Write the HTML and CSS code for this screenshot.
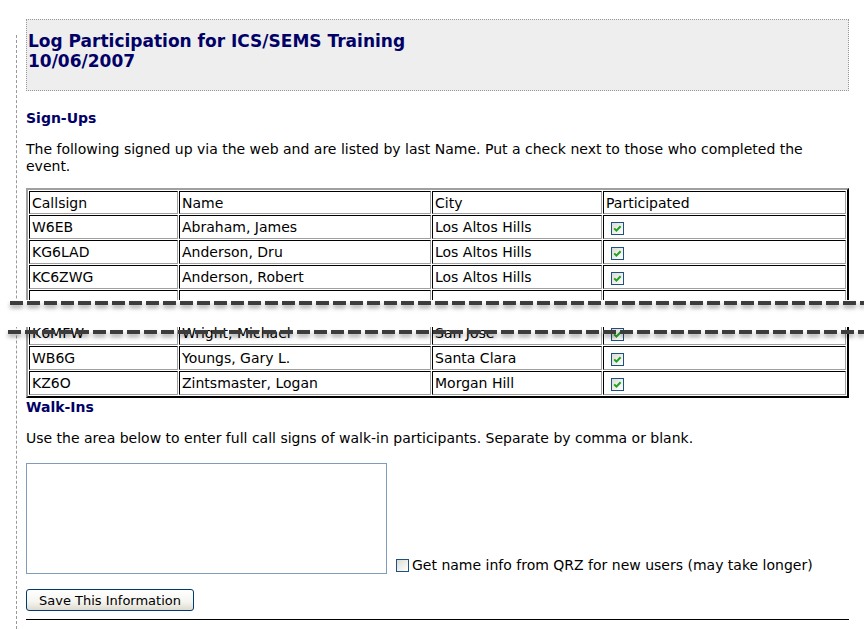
FILE: index.html
```html
<!DOCTYPE html>
<html lang="en">
<head>
    <meta charset="UTF-8">
    <title>Log Participation</title>
    <link rel="stylesheet" href="styles.css">
</head>
<body>
<div class="page">

    <div class="rail"></div>

    <div class="main">
        <!-- Event header -->
        <div class="title-box">
            <h1>Log Participation for ICS/SEMS Training<br>10/06/2007</h1>
        </div>

        <h2 class="first">Sign-Ups</h2>
        <p>The following signed up via the web and are listed by last Name. Put a check next to those who completed the event.</p>

        <table class="signups">
            <tr class="head">
                <td class="c-call">Callsign</td>
                <td class="c-name">Name</td>
                <td class="c-city">City</td>
                <td class="c-part">Participated</td>
            </tr>
            <tr>
                <td>W6EB</td><td>Abraham, James</td><td>Los Altos Hills</td>
                <td><span class="box on"><svg width="13" height="13" viewBox="0 0 13 13"><path d="M3.2 6.4 L5.4 8.6 L9.6 4.2" fill="none" stroke="#21a121" stroke-width="2"/></svg></span></td>
            </tr>
            <tr>
                <td>KG6LAD</td><td>Anderson, Dru</td><td>Los Altos Hills</td>
                <td><span class="box on"><svg width="13" height="13" viewBox="0 0 13 13"><path d="M3.2 6.4 L5.4 8.6 L9.6 4.2" fill="none" stroke="#21a121" stroke-width="2"/></svg></span></td>
            </tr>
            <tr>
                <td>KC6ZWG</td><td>Anderson, Robert</td><td>Los Altos Hills</td>
                <td><span class="box on"><svg width="13" height="13" viewBox="0 0 13 13"><path d="M3.2 6.4 L5.4 8.6 L9.6 4.2" fill="none" stroke="#21a121" stroke-width="2"/></svg></span></td>
            </tr>
            <tr class="cut">
                <td></td><td></td><td></td><td></td>
            </tr>
            <tr>
                <td>K6MFW</td><td>Wright, Michael</td><td>San Jose</td>
                <td><span class="box on"><svg width="13" height="13" viewBox="0 0 13 13"><path d="M3.2 6.4 L5.4 8.6 L9.6 4.2" fill="none" stroke="#21a121" stroke-width="2"/></svg></span></td>
            </tr>
            <tr>
                <td>WB6G</td><td>Youngs, Gary L.</td><td>Santa Clara</td>
                <td><span class="box on"><svg width="13" height="13" viewBox="0 0 13 13"><path d="M3.2 6.4 L5.4 8.6 L9.6 4.2" fill="none" stroke="#21a121" stroke-width="2"/></svg></span></td>
            </tr>
            <tr>
                <td>KZ6O</td><td>Zintsmaster, Logan</td><td>Morgan Hill</td>
                <td><span class="box on"><svg width="13" height="13" viewBox="0 0 13 13"><path d="M3.2 6.4 L5.4 8.6 L9.6 4.2" fill="none" stroke="#21a121" stroke-width="2"/></svg></span></td>
            </tr>
        </table>

        <h2>Walk-Ins</h2>
        <p>Use the area below to enter full call signs of walk-in participants. Separate by comma or blank.</p>

        <div class="walkin-row">
            <textarea class="walkins"></textarea>
            <label class="qrz"><span class="box"></span>Get name info from QRZ for new users (may take longer)</label>
        </div>

        <button class="save-btn">Save This Information</button>
        <hr>
    </div>

    <!-- torn edge: rows left out of the shot -->
    <div class="tear"></div>
</div>
</body>
</html>
```

FILE: styles.css
```css
/* Basics */
body {
    margin: 0;
    font-family: "DejaVu Sans", Verdana, sans-serif;
    font-size: 14px;
    color: #000;
    background: #fff;
}

.page {
    position: relative;
    display: flex;
    min-height: 629px;
}

.rail {
    width: 16px;
    flex-shrink: 0;
    margin-top: 35px;
    border-right: 1px dashed #999;
}

.main {
    flex: 1;
    padding: 19px 15px 0 9px;
}

/* Header */
.title-box {
    background: #eee;
    border: 1px dotted #999;
    padding: 11px 2px 19px 1px;
}

h1 {
    margin: 0;
    font-size: 17px;
    line-height: 20px;
    color: #000066;
}

h2 {
    margin: 0;
    font-size: 14px;
    line-height: 18px;
    color: #000066;
}

h2.first {
    margin-top: 18px;
}

p {
    margin: 14px 0 13px;
    line-height: 17px;
}

/* Sign-up table */
.signups {
    width: 823px;
    table-layout: fixed;
    border-collapse: separate;
    border-spacing: 1px;
    border: 2px solid;
    border-color: #a0a0a0 #000 #000 #a0a0a0;
    font-size: 14px;
}

.signups td {
    box-sizing: border-box;
    height: 24px;
    padding: 0 2px;
    border: 1px solid;
    border-color: #000 #a0a0a0 #a0a0a0 #000;
    line-height: 16px;
    vertical-align: middle;
    white-space: nowrap;
}

.signups .head td {
    height: 23px;
}

.signups .cut td {
    height: 30px;
}

.c-call { width: 149px; }
.c-name { width: 252px; }
.c-city { width: 170px; }
.c-part { width: 243px; }

/* XP style check boxes */
.box {
    display: inline-block;
    box-sizing: border-box;
    width: 13px;
    height: 13px;
    border: 1px solid #1c5180;
    background: linear-gradient(135deg, #dcdcd5, #fff);
    vertical-align: middle;
    position: relative;
}

.signups .box {
    margin-left: 5px;
}

.box svg {
    position: absolute;
    left: -1px;
    top: -1px;
}

/* Walk-ins */
.walkin-row {
    display: flex;
    align-items: flex-end;
    margin-top: 16px;
}

.walkins {
    box-sizing: border-box;
    width: 361px;
    height: 111px;
    margin: 0;
    border: 1px solid #7f9db9;
    resize: none;
}

.qrz {
    display: flex;
    align-items: center;
    gap: 3px;
    margin-left: 9px;
    margin-bottom: 0;
    line-height: 17px;
}

.save-btn {
    display: block;
    margin-top: 15px;
    width: 168px;
    height: 22px;
    padding: 0;
    font-family: "DejaVu Sans", Verdana, sans-serif;
    font-size: 13px;
    color: #000;
    border: 1px solid #003c74;
    border-radius: 3px;
    background: linear-gradient(#fff, #f4f4f0 60%, #dedbcf);
}

hr {
    margin: 8px 0 0;
    border: none;
    border-top: 1px solid #000;
}

/* Tear in the screenshot */
.tear {
    position: absolute;
    left: 0;
    right: 0;
    top: 300px;
    height: 27px;
    background: #fff;
}

.tear::before,
.tear::after {
    content: "";
    position: absolute;
    right: 0;
    height: 4px;
    background: repeating-linear-gradient(90deg, #3c3c3c 0 13px, transparent 13px 17px);
    filter: drop-shadow(0 3px 2px rgba(0, 0, 0, 0.35));
}

.tear::before {
    left: 10px;
    top: 1px;
}

.tear::after {
    left: 8px;
    top: 30px;
}
```
